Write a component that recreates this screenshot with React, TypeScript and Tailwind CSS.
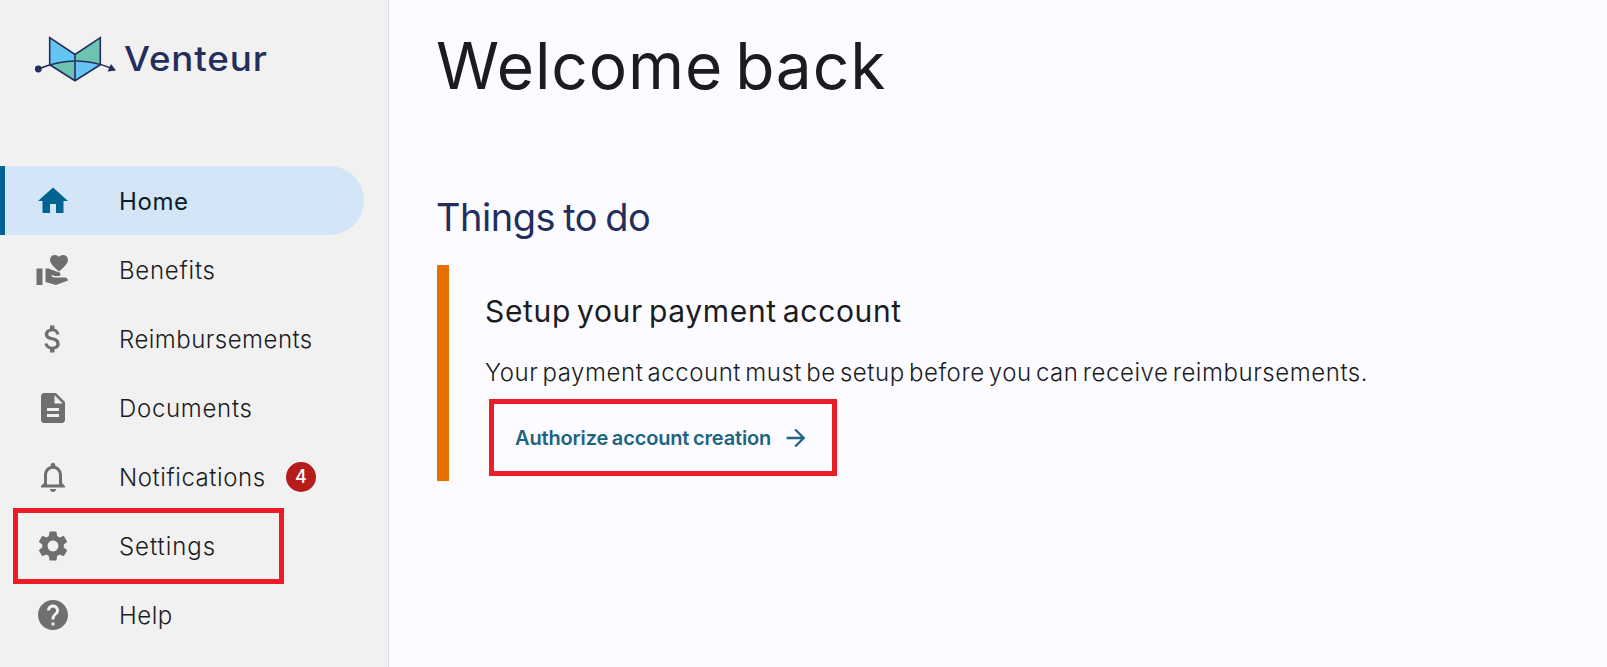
import type { IconType } from "react-icons";
import {
  MdArrowForward,
  MdAttachMoney,
  MdDescription,
  MdHelp,
  MdHome,
  MdNotificationsNone,
  MdSettings,
  MdVolunteerActivism,
} from "react-icons/md";

type NavItem = {
  label: string;
  icon: IconType;
  labelClass: string;
  active?: boolean;
  badge?: number;
  highlighted?: boolean;
};

const navItems: NavItem[] = [
  { label: "Home", icon: MdHome, labelClass: "font-normal tracking-[0.6px]", active: true },
  { label: "Benefits", icon: MdVolunteerActivism, labelClass: "font-light tracking-[0.75px]" },
  { label: "Reimbursements", icon: MdAttachMoney, labelClass: "font-light tracking-[0.47px]" },
  { label: "Documents", icon: MdDescription, labelClass: "font-light tracking-[0.7px]" },
  { label: "Notifications", icon: MdNotificationsNone, labelClass: "font-light tracking-[0.55px]", badge: 4 },
  { label: "Settings", icon: MdSettings, labelClass: "font-light tracking-[0.95px]", highlighted: true },
  { label: "Help", icon: MdHelp, labelClass: "font-light tracking-[0.5px]" },
];

function Logo() {
  return (
    <div className="flex h-[50px] items-center pl-[34px]">
      <svg className="h-[50px] w-[84px]" viewBox="34 34 84 50" fill="none">
        <path d="M49.7 37.7 75 54.5v6.8q-13 0-25.3 3.5z" fill="#64c5f5" />
        <path d="M100.3 37.7 75 54.5v6.8q13 0 25.3 3.5z" fill="#6cc3b2" />
        <path d="M49.7 64.8Q62 61.3 75 61.3v19.5z" fill="#6cc3b2" />
        <path d="M100.3 64.8Q88 61.3 75 61.3v19.5z" fill="#64c5f5" />
        <path
          d="M49.7 37.7 75 54.5l25.3-16.8v27.1L75 80.8 49.7 64.8zM75 54.5v26.3M38.3 69Q75 53.5 110 67.8"
          stroke="#232e5c"
          strokeWidth="1.6"
        />
        <circle cx="38.3" cy="69" r="3.4" fill="#232e5c" />
        <path d="m111 64 5 6.5-8.4.9z" fill="#232e5c" />
      </svg>
      <span className="ml-[6px] origin-left scale-x-[1.08] text-[34px] leading-[50px] font-medium tracking-[0.8px] text-[#232e5c]">
        Venteur
      </span>
    </div>
  );
}

function NavRow({ item }: { item: NavItem }) {
  const Icon = item.icon;

  return (
    <a
      className={
        item.active
          ? "relative flex h-[69px] w-[364px] items-center rounded-r-full border-l-[5px] border-[#006493] bg-[#d3e5f7] pl-[30px] text-[#0b1d29]"
          : "relative flex h-[69px] w-[364px] items-center pl-[35px] text-[#1b1c1e]"
      }
    >
      <Icon
        className={
          item.active ? "size-9 text-[#006493]" : "size-9 text-[#6f6f6f]"
        }
      />
      <span className={`ml-12 pt-0.5 text-2xl ${item.labelClass}`}>
        {item.label}
      </span>
      {item.badge && (
        <span className="absolute top-5 left-[286px] flex size-[30px] items-center justify-center rounded-full bg-[#b71c1c] text-lg font-medium text-white">
          {item.badge}
        </span>
      )}
      {item.highlighted && (
        <span className="absolute -top-[3px] left-[13px] h-[76px] w-[271px] border-[5px] border-[#ed1c24]" />
      )}
    </a>
  );
}

export default function App() {
  return (
    <div className="flex h-[667px] w-full overflow-hidden bg-[#fcfbff] font-['Inter',sans-serif]">
      <aside className="w-[389px] shrink-0 border-r border-[#dcdfe3] bg-[#f1f1f1] pt-[34px]">
        <Logo />
        <nav className="mt-[82px] flex flex-col">
          {navItems.map((item) => (
            <NavRow key={item.label} item={item} />
          ))}
        </nav>
      </aside>

      <main className="flex-1 pt-[26px] pl-12">
        <h1 className="-ml-px text-[64px] leading-[80px] font-normal tracking-[0.9px] [word-spacing:-7px] whitespace-nowrap text-[#1b1c1e]">
          Welcome back
        </h1>
        <h2 className="mt-[87px] -ml-px text-[38px] leading-[48px] font-normal tracking-[-0.5px] [word-spacing:-2px] text-[#232e5c]">
          Things to do
        </h2>

        <section className="mt-6 h-[216px] border-l-[12px] border-[#e76f00] pt-[26px] pl-9">
          <h3 className="text-[30px] leading-10 font-normal tracking-[0.65px] [word-spacing:-3px] text-[#1b1c1e]">
            Setup your payment account
          </h3>
          <p className="mt-[26px] text-2xl leading-8 font-light tracking-[0.55px] [word-spacing:-3.1px] whitespace-nowrap text-[#1b1c1e]">
            Your payment account must be setup before you can receive
            reimbursements.
          </p>
          <button className="mt-2.5 ml-1 flex h-[77px] w-[348px] items-center border-[5px] border-[#e81f28] pl-[21px] text-[#1c6480]">
            <span className="text-xl font-semibold tracking-[-0.15px] [word-spacing:-1.2px] whitespace-nowrap">
              Authorize account creation
            </span>
            <MdArrowForward className="ml-auto mr-[22px] size-7 shrink-0" />
          </button>
        </section>
      </main>
    </div>
  );
}
